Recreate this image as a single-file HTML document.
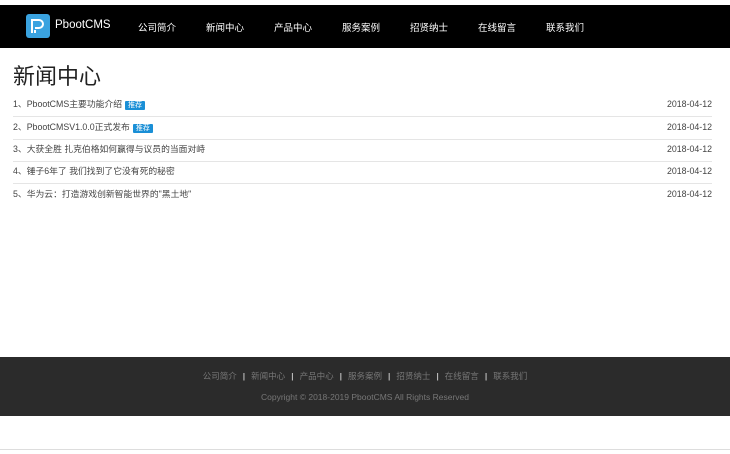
<!DOCTYPE html><html><head><meta charset="utf-8"><style>
body{margin:0;width:730px;height:454px;background:#fff;font-family:"Liberation Sans","Noto Sans CJK SC",sans-serif;position:relative;overflow:hidden}
.hd{position:absolute;top:5px;left:0;width:730px;height:43px;background:#000}
.logo{position:absolute;left:26px;top:9px;width:24px;height:24px;background:#3aa3e0;border-radius:3px}
.brand{position:absolute;left:55px;top:14px;color:#fff;font-size:11.5px}
.nav{position:absolute;top:15px;color:#fff;font-size:9.5px}
h1{position:absolute;left:13px;top:59px;margin:0;font-weight:normal;font-size:22px;color:#222}
.row{position:absolute;left:13px;width:699px;height:18px;line-height:12px;font-size:8.8px;color:#444;border-bottom:1px solid #e5e5e5}
.row span.d{position:absolute;right:0;top:0}
.tag{background:#1a8fd6;color:#fff;font-size:7px;padding:1px 3px;margin-left:3px;border-radius:1px}
.ft{position:absolute;top:357px;left:0;width:730px;height:59px;background:#2b2b2b;color:#777;font-size:8.5px;text-align:center}
.ft b{color:#bbb;margin:0 6px}
.line{position:absolute;top:449px;left:0;width:730px;height:1px;background:#ddd}
</style></head><body>
<div class="hd"><div class="logo"><svg width="24" height="24" viewBox="0 0 24 24"><path d="M6 19V6h7a4 4 0 0 1 0 8H9M9 19v-3" stroke="#fff" stroke-width="2" fill="none"/></svg></div><div class="brand">PbootCMS</div>
<span class="nav" style="left:138px">公司简介</span><span class="nav" style="left:206px">新闻中心</span><span class="nav" style="left:274px">产品中心</span><span class="nav" style="left:342px">服务案例</span><span class="nav" style="left:410px">招贤纳士</span><span class="nav" style="left:478px">在线留言</span><span class="nav" style="left:546px">联系我们</span></div>
<h1>新闻中心</h1>
<div class="row" style="top:98px">1、PbootCMS主要功能介绍<span class="tag">推荐</span><span class="d">2018-04-12</span></div>
<div class="row" style="top:121px">2、PbootCMSV1.0.0正式发布<span class="tag">推荐</span><span class="d">2018-04-12</span></div>
<div class="row" style="top:143px">3、大获全胜 扎克伯格如何赢得与议员的当面对峙<span class="d">2018-04-12</span></div>
<div class="row" style="top:165px">4、锤子6年了 我们找到了它没有死的秘密<span class="d">2018-04-12</span></div>
<div class="row" style="top:188px;border:none">5、华为云：打造游戏创新智能世界的"黑土地"<span class="d">2018-04-12</span></div>
<div class="ft"><div style="margin-top:13px">公司简介<b>|</b>新闻中心<b>|</b>产品中心<b>|</b>服务案例<b>|</b>招贤纳士<b>|</b>在线留言<b>|</b>联系我们</div><div style="margin-top:10px">Copyright © 2018-2019 PbootCMS All Rights Reserved</div></div>
<div class="line"></div>
</body></html>
